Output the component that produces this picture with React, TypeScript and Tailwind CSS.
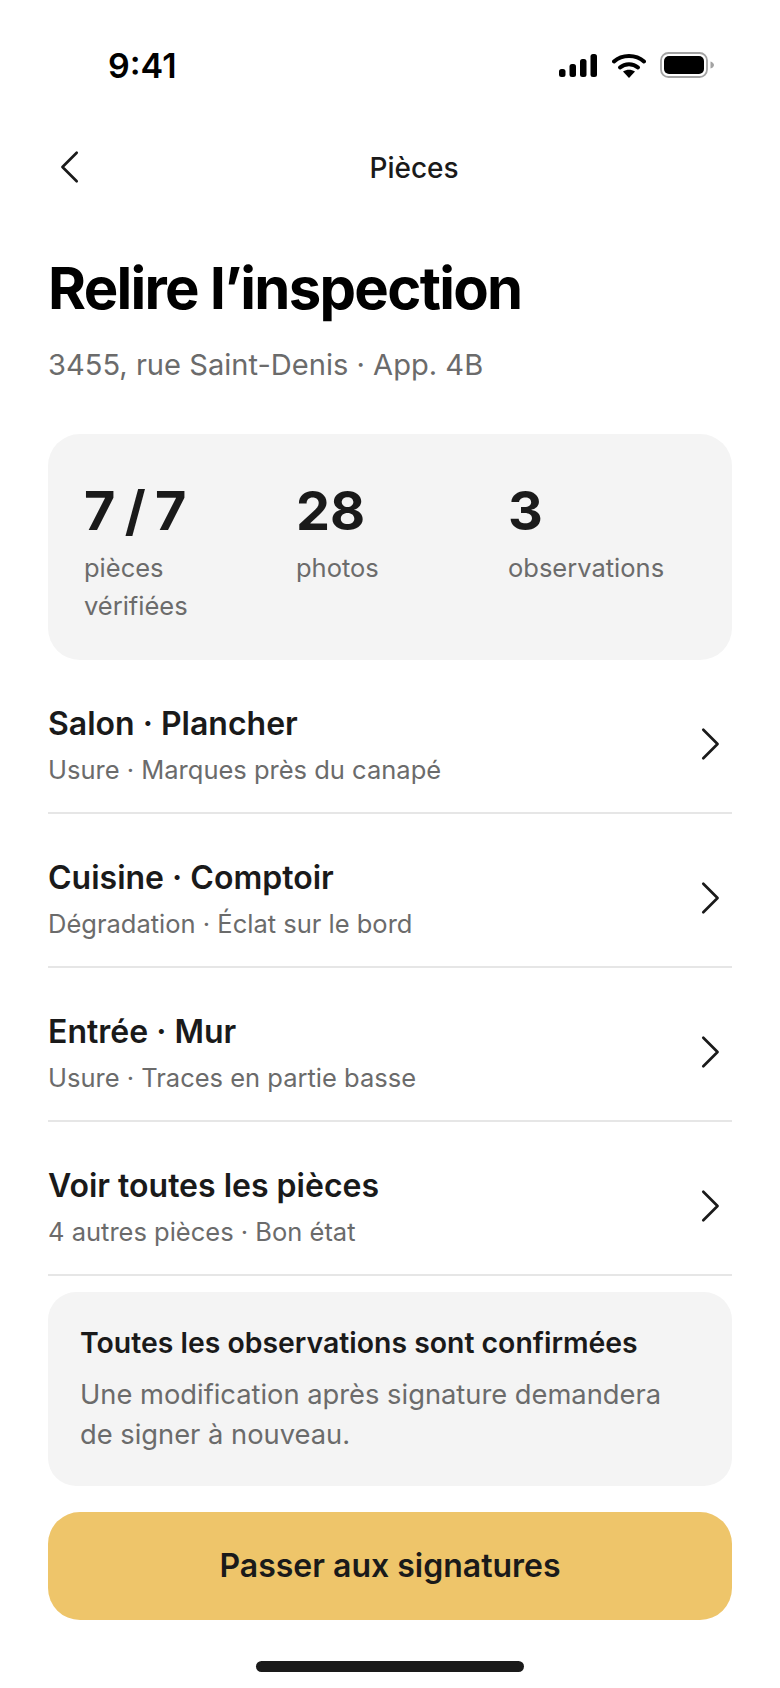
import React from "react";

const rows = [
  { title: "Salon · Plancher", sub: "Usure · Marques près du canapé" },
  { title: "Cuisine · Comptoir", sub: "Dégradation · Éclat sur le bord" },
  { title: "Entrée · Mur", sub: "Usure · Traces en partie basse" },
  { title: "Voir toutes les pièces", sub: "4 autres pièces · Bon état" },
];

const stats = [
  { value: "7 / 7", label: "pièces vérifiées" },
  { value: "28", label: "photos" },
  { value: "3", label: "observations" },
];

function StatusIcons() {
  return (
    <div className="flex items-center">
      <svg width="38" height="24" viewBox="0 0 38 24" fill="#000">
        <rect x="0" y="16" width="6.5" height="8" rx="2.5" />
        <rect x="10.5" y="11" width="6.5" height="13" rx="2.5" />
        <rect x="21" y="6" width="6.5" height="18" rx="2.5" />
        <rect x="31.5" y="1" width="6.5" height="23" rx="2.5" />
      </svg>
      <svg width="34" height="25" viewBox="0 0 34 25" fill="none" className="ml-[15px]">
        <path d="M2 8.5C10 1 24 1 32 8.5" stroke="#000" strokeWidth="4" strokeLinecap="round" />
        <path d="M8 14.5C13 10 21 10 26 14.5" stroke="#000" strokeWidth="4" strokeLinecap="round" />
        <path d="M11 18.5 L17 25 L23 18.5 C19 16 15 16 11 18.5Z" fill="#000" />
      </svg>
      <svg width="54" height="26" viewBox="0 0 54 26" fill="none" className="ml-[14px]">
        <rect x="1" y="1" width="46" height="24" rx="7.5" stroke="#a3a3a3" strokeWidth="1.8" />
        <rect x="4" y="4" width="40" height="18" rx="5" fill="#000" />
        <path d="M50.5 9.5C52.5 10 54 11.5 54 13C54 14.5 52.5 16 50.5 16.5Z" fill="#a3a3a3" />
      </svg>
    </div>
  );
}

export default function App() {
  return (
    <div className="w-[780px] h-[1688px] bg-white flex flex-col font-['Inter',sans-serif] text-[#1a1a1a] overflow-hidden">
      <div className="h-[130px] flex items-start justify-between pt-[47px] pl-[108px] pr-[66px]">
        <span className="text-[34px] leading-[38px] font-semibold text-black">9:41</span>
        <div className="pt-[5px]">
          <StatusIcons />
        </div>
      </div>

      <div className="h-[76px] px-[48px] flex items-center relative">
        <svg width="40" height="40" viewBox="0 0 40 40" fill="none" stroke="#1a1a1a" strokeWidth="2.8" strokeLinecap="round" strokeLinejoin="round" className="ml-[6px]">
          <path d="M26 5 L11 20 L26 35" transform="translate(-2 0) scale(0.95 0.95)" />
        </svg>
        <span className="absolute left-[48px] right-0 text-center text-[28px] font-medium">Pièces</span>
      </div>

      <div className="px-[48px] flex flex-col">
        <h1 className="mt-[50px] text-[58px] leading-[64px] font-bold tracking-[-1.7px] text-black">Relire l’inspection</h1>
        <p className="mt-[26px] text-[29.1px] leading-[38px] text-[#6b6b6b]">3455, rue Saint-Denis · App. 4B</p>

        <div className="mt-[50px] h-[226px] bg-[#f4f4f4] rounded-[32px] px-[36px] pt-[49px] grid grid-cols-3 gap-[24px] items-start">
          {stats.map((s) => (
            <div key={s.value} className="flex flex-col">
              <span className="text-[54px] leading-[56px] font-bold [word-spacing:-3.5px]">{s.value}</span>
              <span className="mt-[10px] text-[25.5px] leading-[38px] text-[#6b6b6b]">{s.label}</span>
            </div>
          ))}
        </div>

        <div className="flex flex-col">
          {rows.map((r) => (
            <div key={r.title} className="h-[154px] pt-[18px] border-b-2 border-[#e6e6e6] flex items-center justify-between">
              <div className="flex flex-col pt-[1px]">
                <span className="text-[32px] leading-[40px] font-semibold">{r.title}</span>
                <span className="mt-[8px] text-[25.5px] leading-[36px] text-[#6b6b6b]">{r.sub}</span>
              </div>
              <svg width="40" height="40" viewBox="0 0 40 40" fill="none" stroke="#1a1a1a" strokeWidth="2.8" strokeLinecap="round" strokeLinejoin="round" className="mr-[2px]">
                <path d="M14 5 L29 20 L14 35" transform="scale(0.95 0.95)" />
              </svg>
            </div>
          ))}
        </div>

        <div className="mt-[16px] h-[194px] bg-[#f4f4f4] rounded-[28px] px-[32px] pt-[31px]">
          <p className="text-[28.4px] leading-[40px] font-semibold">Toutes les observations sont confirmées</p>
          <p className="mt-[12px] text-[27.3px] leading-[40px] text-[#6b6b6b] w-[600px]">Une modification après signature demandera de signer à nouveau.</p>
        </div>

        <button className="mt-[26px] h-[108px] bg-[#eec56a] rounded-[32px] text-[32px] font-semibold">Passer aux signatures</button>
      </div>

      <div className="mt-[41px] mx-auto w-[268px] h-[11px] rounded-full bg-[#1a1a1a]" />
    </div>
  );
}
